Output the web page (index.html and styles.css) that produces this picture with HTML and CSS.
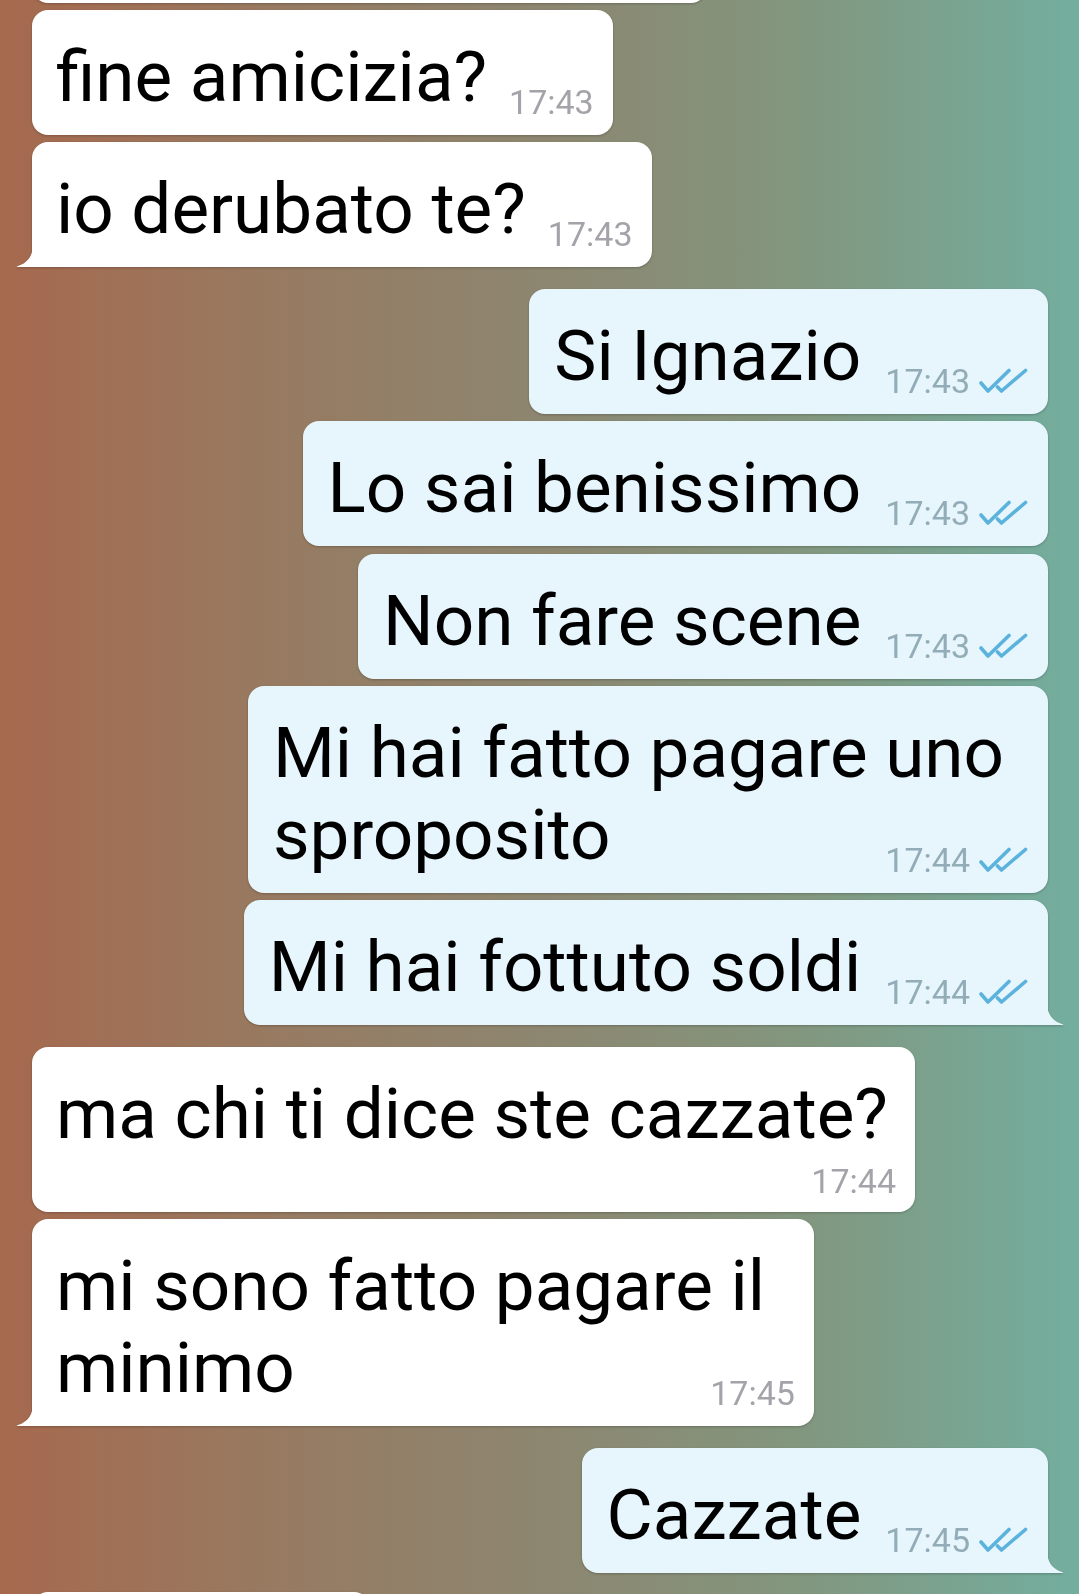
FILE: index.html
```html
<!DOCTYPE html>
<html lang="it">
<head>
<meta charset="utf-8">
<title>Chat</title>
<link rel="stylesheet" href="styles.css">
</head>
<body>
<div class="chat">
  <div class="row in clip-top"><div class="bubble stub-top"></div></div>

  <div class="row in"><div class="bubble">fine amicizia?<span class="meta">17:43</span></div></div>
  <div class="row in"><div class="bubble tail">io derubato te?<span class="meta">17:43</span></div></div>

  <div class="row out new-group"><div class="bubble">Si Ignazio<span class="meta">17:43<svg class="ticks" viewBox="0 0 51 26" width="51" height="26"><path d="M3 15 L10 23 L31 2.5 M19.5 19 L23.5 23 L47.5 2.5"/></svg></span></div></div>
  <div class="row out"><div class="bubble">Lo sai benissimo<span class="meta">17:43<svg class="ticks" viewBox="0 0 51 26" width="51" height="26"><path d="M3 15 L10 23 L31 2.5 M19.5 19 L23.5 23 L47.5 2.5"/></svg></span></div></div>
  <div class="row out"><div class="bubble">Non fare scene<span class="meta">17:43<svg class="ticks" viewBox="0 0 51 26" width="51" height="26"><path d="M3 15 L10 23 L31 2.5 M19.5 19 L23.5 23 L47.5 2.5"/></svg></span></div></div>
  <div class="row out"><div class="bubble wrap">Mi hai fatto pagare uno<br>sproposito<span class="meta">17:44<svg class="ticks" viewBox="0 0 51 26" width="51" height="26"><path d="M3 15 L10 23 L31 2.5 M19.5 19 L23.5 23 L47.5 2.5"/></svg></span></div></div>
  <div class="row out"><div class="bubble tail">Mi hai fottuto soldi<span class="meta">17:44<svg class="ticks" viewBox="0 0 51 26" width="51" height="26"><path d="M3 15 L10 23 L31 2.5 M19.5 19 L23.5 23 L47.5 2.5"/></svg></span></div></div>

  <div class="row in new-group"><div class="bubble meta-below">ma chi ti dice ste cazzate?<span class="meta">17:44</span></div></div>
  <div class="row in"><div class="bubble tail wrap">mi sono fatto pagare il<br>minimo<span class="meta">17:45</span></div></div>

  <div class="row out new-group"><div class="bubble tail">Cazzate<span class="meta">17:45<svg class="ticks" viewBox="0 0 51 26" width="51" height="26"><path d="M3 15 L10 23 L31 2.5 M19.5 19 L23.5 23 L47.5 2.5"/></svg></span></div></div>

  <div class="row in last"><div class="bubble stub-bottom"></div></div>
</div>
</body>
</html>
```

FILE: styles.css
```css
* {
  box-sizing: border-box;
}

html,
body {
  margin: 0;
  padding: 0;
}

body {
  width: 1079px;
  height: 1594px;
  overflow: hidden;
  font-family: Roboto, "Noto Sans", "Liberation Sans", sans-serif;
}

.chat {
  height: 1594px;
  overflow: hidden;
  display: flex;
  flex-direction: column;
  gap: 7.3px;
  background: linear-gradient(90deg, #a6694e 0%, #977a61 25%, #8d8670 50%, #82977f 75%, #73ae9f 100%);
}

.row {
  display: flex;
  flex-shrink: 0;
}

.row.in {
  justify-content: flex-start;
  padding-left: 32px;
}

.row.out {
  justify-content: flex-end;
  padding-right: 31px;
}

.row.new-group {
  margin-top: 14.5px;
}

.row.clip-top {
  margin-top: -37.3px;
}

.row.last {
  margin-top: 12px;
}

.bubble {
  position: relative;
  max-width: 883px;
  padding: 26px 19px 17px 24px;
  border-radius: 16px;
  font-size: 71px;
  line-height: 82px;
  color: #000;
  filter: drop-shadow(0 1px 1px rgba(0, 0, 0, 0.22));
}

.in .bubble {
  background: #ffffff;
}

.out .bubble {
  background: #e7f5fc;
  padding-left: 25px;
}

.stub-top {
  width: 675px;
  height: 40px;
  padding: 0;
}

.stub-bottom {
  width: 338px;
  height: 60px;
  padding: 0;
}

.meta {
  float: right;
  margin: 52px 0 0 22px;
  font-size: 34px;
  line-height: 28px;
  white-space: nowrap;
}

.in .meta {
  color: #a5a3a9;
}

.out .meta {
  color: #93adb8;
  margin-left: 24px;
}

.meta-below .meta {
  margin-top: 12px;
}

.wrap {
  padding-right: 44px;
}

.wrap .meta {
  margin-right: -25px;
}

.in .wrap {
  padding-right: 49px;
}

.in .wrap .meta {
  margin-right: -30px;
}

.ticks {
  display: inline-block;
  margin-left: 8px;
  vertical-align: -1px;
  fill: none;
  stroke: #5bb3dd;
  stroke-width: 3.6;
  stroke-linecap: round;
  stroke-linejoin: round;
}

.in .tail {
  border-bottom-left-radius: 0;
}

.out .tail {
  border-bottom-right-radius: 0;
}

.tail::before {
  content: "";
  position: absolute;
  bottom: 0;
  width: 18px;
  height: 22px;
  background-repeat: no-repeat;
  background-size: 18px 22px;
}

.in .tail::before {
  left: -16px;
  background-image: url("data:image/svg+xml,%3Csvg xmlns='http://www.w3.org/2000/svg' viewBox='0 0 18 22'%3E%3Cpath d='M18 0 L17 0 C17 10 12 18 2 21 C0 21.6 0.5 22 2 22 L18 22 Z' fill='%23ffffff'/%3E%3C/svg%3E");
}

.out .tail::before {
  right: -16px;
  background-image: url("data:image/svg+xml,%3Csvg xmlns='http://www.w3.org/2000/svg' viewBox='0 0 18 22'%3E%3Cpath d='M0 0 L1 0 C1 10 6 18 16 21 C18 21.6 17.5 22 16 22 L0 22 Z' fill='%23e7f5fc'/%3E%3C/svg%3E");
}
```
